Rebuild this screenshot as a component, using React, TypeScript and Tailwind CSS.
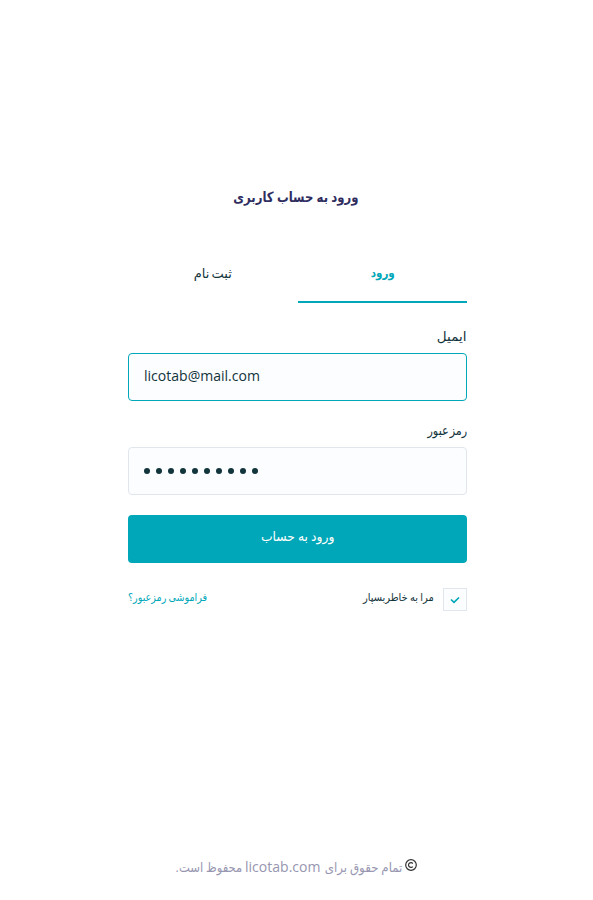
import { useState } from "react";

const arabic = "font-['DejaVu_Sans','Noto_Sans',sans-serif]";

export default function App() {
  const [remember, setRemember] = useState(true);
  return (
    <div dir="rtl" className={`flex h-[900px] w-full flex-col bg-white text-[13px] text-[#12343b] ${arabic}`}>
      <main dir="ltr" className="mr-[126px] flex w-[339px] flex-col">
        <h1 dir="rtl" className="mt-[184px] h-6 pr-[3px] text-center text-[14px] leading-[26px] font-bold whitespace-nowrap text-[#2f2e5f]">
          <span className="inline-block scale-x-[0.835] [word-spacing:-1px]">ورود به حساب کاربری</span>
        </h1>
        <nav dir="rtl" className="mt-[48px] grid h-[47px] grid-cols-2 text-center leading-[35px]">
          <button className="border-b-2 border-[#00a7b8] text-[12px] font-bold text-[#00a7b8]">
            <span className="block h-[45px] scale-x-[0.86]">ورود</span>
          </button>
          <button>
            <span className="block h-[47px] [word-spacing:-2px]">ثبت نام</span>
          </button>
        </nav>
        <label dir="rtl" className="mt-[22px] h-7 leading-6">
          <span className="inline-block origin-right scale-x-[1.04]">ایمیل</span>
        </label>
        <div className="flex h-12 items-center rounded border border-[#00a7b8] bg-[#fcfdff] px-[15px] pb-[3px] font-['Open_Sans',sans-serif] text-[14.4px]">
          <span className="inline-block origin-left scale-x-[0.975]">licotab@mail.com</span>
        </div>
        <label dir="rtl" className="mt-[18px] h-7 leading-6">
          <span className="inline-block origin-right scale-x-[0.86] [word-spacing:-3px]">رمز عبور</span>
        </label>
        <div className="flex h-12 items-center gap-1.5 rounded border border-[#e1e6ec] bg-[#fcfdff] px-[15px]">
          {Array.from({ length: 10 }, (_, i) => (
            <i key={i} className="size-1.5 rounded-full bg-[#12343b]" />
          ))}
        </div>
        <button dir="rtl" className="mt-5 h-12 rounded bg-[#00a7b8] pb-1 text-white">
          <span className="inline-block scale-x-[0.95] [word-spacing:-1px]">ورود به حساب</span>
        </button>
        <div dir="rtl" className="mt-[25px] flex h-[23px] items-center justify-between text-[11px] whitespace-nowrap">
          <button onClick={() => setRemember(!remember)} className="flex items-center gap-[9px]">
            <span className="flex h-[23px] w-6 items-center justify-center border border-[#e1e6ec] bg-[#fcfdff]">
              {remember && (
                <svg className="mt-px h-2 w-2.5" viewBox="0 0 10 8" fill="none" stroke="#00a7b8" strokeWidth="1.7">
                  <path d="M1 3.5 4 6.3 9 1.5" />
                </svg>
              )}
            </span>
            <span className="-mt-0.5 inline-block origin-right scale-x-[0.9] [word-spacing:-1px]">مرا به خاطربسپار</span>
          </button>
          <a className="-mt-0.5 inline-block origin-left scale-x-[0.87] text-[#00a7b8] [word-spacing:-1px]">فراموشی رمزعبور؟</a>
        </div>
      </main>
      <footer className="mt-auto mr-[176px] mb-[20px] flex h-6 items-center whitespace-nowrap text-[#9796b0]">
        <svg className="mb-1.5 size-3" viewBox="0 0 12 12" fill="none" stroke="#333333" strokeWidth="1.2">
          <circle cx="6" cy="6" r="5.3" />
          <path d="M7.8 4.5a2.4 2.4 0 1 0 0 3" />
        </svg>
        <span className="mr-[3px] w-[79px]">
          <span className="inline-block origin-right scale-x-[0.91] [word-spacing:-1px]">تمام حقوق برای</span>
        </span>
        <span dir="ltr" className="mr-[3px] mb-[3px] w-[75px] font-['Open_Sans',sans-serif] text-[14.4px]">
          <span className="inline-block origin-left scale-x-[0.975]">licotab.com</span>
        </span>
        <span className="mr-[3px] w-[67px]">
          <span className="inline-block origin-right scale-x-[0.89] [word-spacing:-1px]">محفوظ است.</span>
        </span>
      </footer>
    </div>
  );
}
